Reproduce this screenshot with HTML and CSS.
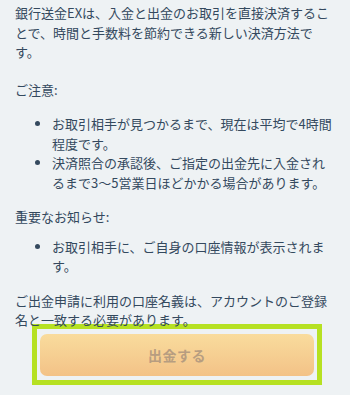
FILE: index.html
```html
<!DOCTYPE html>
<html lang="ja">
<head>
<meta charset="utf-8">
<link rel="stylesheet" href="styles.css">
</head>
<body>
<div class="page">
  <p class="intro">銀行送金EXは、入金と出金のお取引を直接決済することで、時間と手数料を節約できる新しい決済方法です。</p>
  <p class="heading">ご注意:</p>
  <ul class="list list-first">
    <li>お取引相手が見つかるまで、現在は平均で4時間程度です。</li>
    <li>決済照合の承認後、ご指定の出金先に入金されるまで3〜5営業日ほどかかる場合があります。</li>
  </ul>
  <p class="heading heading-notice">重要なお知らせ:</p>
  <ul class="list list-second">
    <li>お取引相手に、ご自身の口座情報が表示されます。</li>
  </ul>
  <p class="note">ご出金申請に利用の口座名義は、アカウントのご登録名と一致する必要があります。</p>
  <div class="highlight">
    <button class="withdraw" type="button">出金する</button>
  </div>
</div>
</body>
</html>
```
FILE: styles.css
```css
html, body {
  margin: 0;
  padding: 0;
  background: #eef2f4;
}

.page {
  padding: 3px 15px 0 15px;
  font-family: "Noto Sans CJK JP", "Noto Sans", sans-serif;
  font-size: 13px;
  line-height: 19.5px;
  color: #34495e;
}

p {
  margin: 0;
}

.intro {
  margin-bottom: 18px;
}

.heading {
  margin-bottom: 15px;
}

.heading-notice {
  margin-bottom: 10px;
}

.list {
  margin: 0;
  padding-left: 37px;
  list-style: disc;
}

.list-first {
  margin-bottom: 15px;
}

.list-second {
  margin-bottom: 15px;
}

.highlight {
  margin: -6px 0 0 17px;
  width: 274px;
  border: 5px solid #b6e122;
  padding: 5px 3px 4px 3px;
}

.withdraw {
  display: block;
  width: 100%;
  height: 42px;
  border: none;
  border-radius: 7px;
  background: linear-gradient(to bottom, #f9dc9d, #f3c287);
  color: #b79d80;
  font-family: "Noto Sans CJK JP", "Noto Sans", sans-serif;
  font-size: 14px;
  font-weight: 700;
  letter-spacing: 0.5px;
}
```
